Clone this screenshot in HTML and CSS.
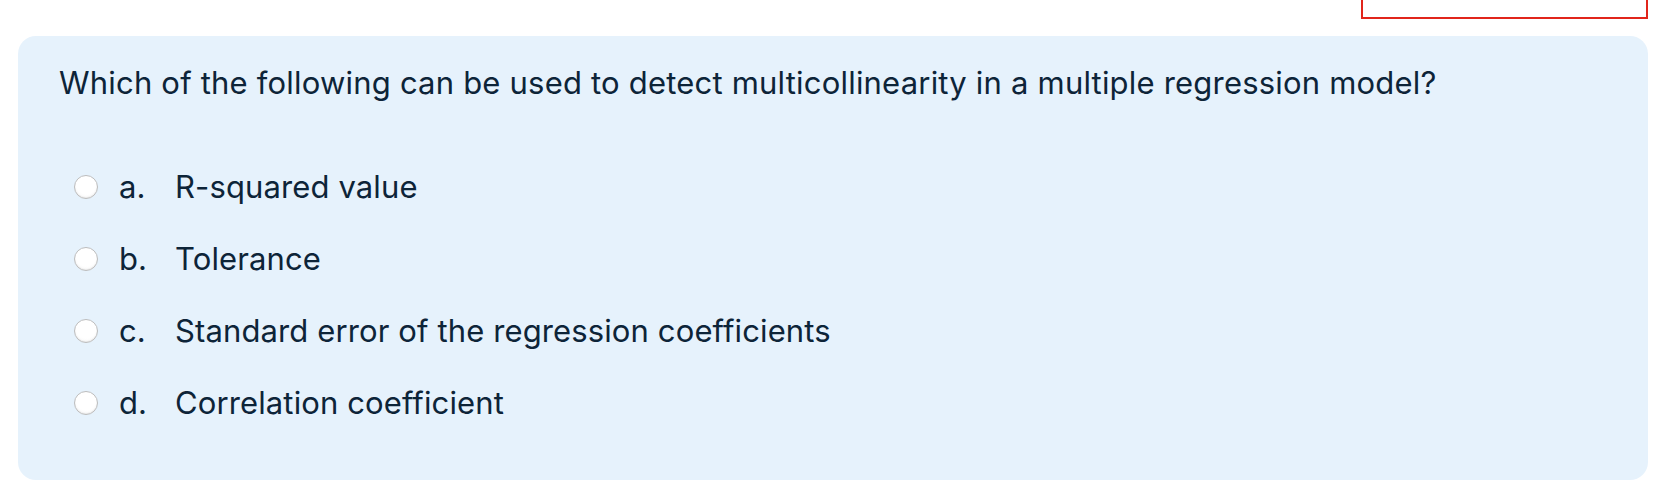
FILE: index.html
```html
<!DOCTYPE html>
<html lang="en">
<head>
<meta charset="utf-8">
<title>Question</title>
<link rel="stylesheet" href="styles.css">
</head>
<body>
  <div class="topbar">
    <div class="flag-box"></div>
  </div>
  <div class="question-card">
    <div class="qtext">Which of the following can be used to detect multicollinearity in a multiple regression model?</div>
    <div class="answers">
      <label class="answer"><span class="radio"></span><span class="letter">a.</span><span class="atext">R-squared value</span></label>
      <label class="answer"><span class="radio"></span><span class="letter">b.</span><span class="atext">Tolerance</span></label>
      <label class="answer"><span class="radio"></span><span class="letter">c.</span><span class="atext">Standard error of the regression coefficients</span></label>
      <label class="answer"><span class="radio"></span><span class="letter">d.</span><span class="atext">Correlation coefficient</span></label>
    </div>
  </div>
</body>
</html>
```

FILE: styles.css
```css
html, body {
  margin: 0;
  padding: 0;
  background: #ffffff;
  height: 480px;
  overflow: hidden;
}
body {
  font-family: "Inter", "Liberation Sans", sans-serif;
  color: #0d2438;
}
.topbar {
  height: 36px;
  display: flex;
  justify-content: flex-end;
  padding-right: 22px;
}
.flag-box {
  width: 287px;
  height: 30px;
  margin-top: -11px;
  border: 2px solid #e1251b;
  box-sizing: border-box;
}
.question-card {
  margin: 0 22px 0 18px;
  background: #e6f2fc;
  border-radius: 18px;
  height: 444px;
  box-sizing: border-box;
  padding: 28px 40px 0 41px;
}
.qtext {
  font-size: 31px;
  line-height: 38px;
  letter-spacing: 0.2px;
}
.answers {
  display: flex;
  flex-direction: column;
  gap: 34px;
  margin-top: 66px;
  padding-left: 15px;
}
.answer {
  display: flex;
  align-items: center;
  font-size: 31px;
  line-height: 38px;
  letter-spacing: 0.12px;
}
.radio {
  width: 22px;
  height: 22px;
  border-radius: 50%;
  border: 1px solid #bdbdbd;
  background: radial-gradient(circle at 50% 40%, #ffffff 55%, #f1f1f1 100%);
  box-shadow: inset 0 -1px 1px rgba(0, 0, 0, 0.06);
  flex: none;
}
.letter {
  width: 56px;
  margin-left: 21px;
  flex: none;
}
```
